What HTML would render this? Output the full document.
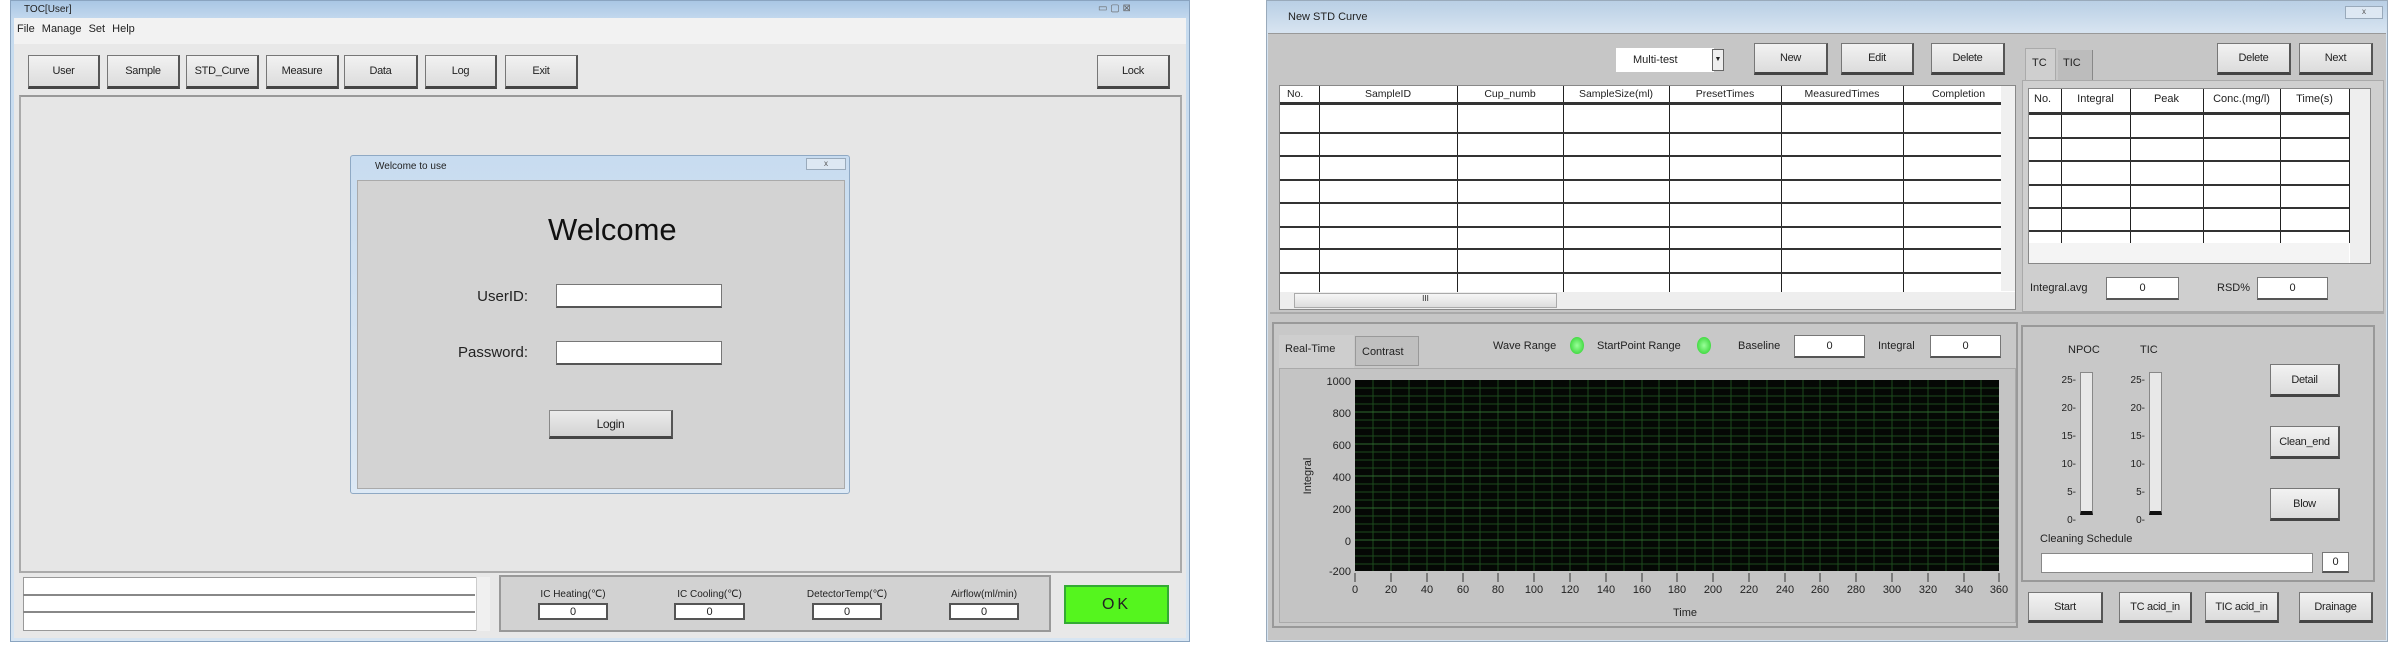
<!DOCTYPE html>
<html><head><meta charset="utf-8"><style>
*{margin:0;padding:0;box-sizing:border-box}
body{width:2388px;height:648px;background:#fff;position:relative;overflow:hidden;font-family:"Liberation Sans",sans-serif;font-size:11px;color:#222}
.a{position:absolute}
.btn{position:absolute;background:linear-gradient(#f2f2f2,#dcdcdc);border:1px solid #777;border-right:2px solid #555;border-bottom:3px solid #444;display:flex;align-items:center;justify-content:center;font-size:11px;letter-spacing:-0.3px}
.lbtn{position:absolute;background:linear-gradient(#ececec,#d2d2d2);border:1px solid #888;border-right:2px solid #555;border-bottom:3px solid #444;display:flex;align-items:center;justify-content:center;font-size:12px;letter-spacing:-0.3px}
.inp{position:absolute;background:#fff;border:1px solid #777;border-bottom:2px solid #555;display:flex;align-items:center;justify-content:center;font-size:11px}
.t{position:absolute;white-space:nowrap}
.vl{position:absolute;width:1px;background:#222}
.hl{position:absolute;height:2px;background:#333}
</style></head><body>
<!-- LEFT WINDOW -->
<div class="a" style="left:10px;top:0;width:1180px;height:642px;background:linear-gradient(#a9c6e4,#c6dbef 20px,#d7e5f2);border:1px solid #8aa4c0"></div>
<div class="t" style="left:24px;top:4px;font-size:10px">TOC[User]</div>
<div class="t" style="left:1098px;top:3px;font-size:10px;color:#666">▭ ▢ ⊠</div>
<div class="a" style="left:14px;top:18px;width:1172px;height:620px;background:#e8e8e8"></div>
<div class="a" style="left:14px;top:18px;width:1172px;height:26px;background:#f2f2f2"></div>
<div class="t" style="left:17px;top:23px;font-size:11px;word-spacing:4px">File Manage Set Help</div>
<div class="btn" style="left:28px;top:55px;width:72px;height:34px">User</div>
<div class="btn" style="left:107px;top:55px;width:73px;height:34px">Sample</div>
<div class="btn" style="left:186px;top:55px;width:73px;height:34px">STD_Curve</div>
<div class="btn" style="left:266px;top:55px;width:73px;height:34px">Measure</div>
<div class="btn" style="left:344px;top:55px;width:74px;height:34px">Data</div>
<div class="btn" style="left:425px;top:55px;width:72px;height:34px">Log</div>
<div class="btn" style="left:505px;top:55px;width:73px;height:34px">Exit</div>
<div class="btn" style="left:1097px;top:55px;width:73px;height:34px">Lock</div>
<div class="a" style="left:19px;top:95px;width:1163px;height:478px;border:2px solid #aaa;border-top-color:#999;background:#e6e6e6"></div>
<!-- dialog -->
<div class="a" style="left:350px;top:155px;width:500px;height:339px;background:linear-gradient(#c8dcf0,#dde9f5);border:1px solid #8fa9c4;border-radius:3px"></div>
<div class="t" style="left:375px;top:161px;font-size:10px">Welcome to use</div>
<div class="a" style="left:806px;top:158px;width:40px;height:12px;border:1px solid #9ab;background:#dde8f3;font-size:8px;text-align:center;color:#555">x</div>
<div class="a" style="left:357px;top:180px;width:488px;height:309px;background:#d3d3d3;border:1px solid #aaa"></div>
<div class="t" style="left:548px;top:212px;font-size:31px;color:#111">Welcome</div>
<div class="t" style="left:468px;top:288px;font-size:15px;width:60px;text-align:right">UserID:</div>
<div class="inp" style="left:556px;top:284px;width:166px;height:24px"></div>
<div class="t" style="left:448px;top:344px;font-size:15px;width:80px;text-align:right">Password:</div>
<div class="inp" style="left:556px;top:341px;width:166px;height:24px"></div>
<div class="lbtn" style="left:549px;top:410px;width:124px;height:29px">Login</div>
<!-- bottom -->
<div class="a" style="left:23px;top:577px;width:467px;height:54px;background:#fff;border:1px solid #999"></div>
<div class="a" style="left:23px;top:594px;width:452px;height:2px;background:#888"></div>
<div class="a" style="left:23px;top:611px;width:452px;height:2px;background:#888"></div>
<div class="a" style="left:476px;top:577px;width:14px;height:54px;background:#f0f0f0;border-left:1px solid #ccc"></div>
<div class="a" style="left:499px;top:575px;width:552px;height:57px;background:#d2d2d2;border:2px solid #999"></div>
<div class="t" style="left:538px;top:589px;width:70px;text-align:center;font-size:10px">IC Heating(℃)</div>
<div class="t" style="left:674px;top:589px;width:71px;text-align:center;font-size:10px">IC Cooling(℃)</div>
<div class="t" style="left:804px;top:589px;width:86px;text-align:center;font-size:10px">DetectorTemp(℃)</div>
<div class="t" style="left:944px;top:589px;width:80px;text-align:center;font-size:10px">Airflow(ml/min)</div>
<div class="inp" style="left:538px;top:603px;width:70px;height:17px;border:2px solid #555">0</div>
<div class="inp" style="left:674px;top:603px;width:71px;height:17px;border:2px solid #555">0</div>
<div class="inp" style="left:812px;top:603px;width:70px;height:17px;border:2px solid #555">0</div>
<div class="inp" style="left:949px;top:603px;width:70px;height:17px;border:2px solid #555">0</div>
<div class="a" style="left:1064px;top:585px;width:105px;height:39px;background:#55f51e;border:2px solid #3a3;display:flex;align-items:center;justify-content:center;font-size:16px;letter-spacing:3px">OK</div>

<!-- RIGHT WINDOW -->
<div class="a" style="left:1266px;top:0;width:1122px;height:642px;background:linear-gradient(#b9cfe5,#d6e3f0 30px);border:1px solid #9ab"></div>
<div class="t" style="left:1288px;top:11px;font-size:11px">New STD Curve</div>
<div class="a" style="left:2345px;top:6px;width:38px;height:13px;border:1px solid #9ab;background:#dde8f3;font-size:8px;text-align:center;color:#555">x</div>
<div class="a" style="left:1268px;top:33px;width:1118px;height:607px;background:#c6c6c6;border-top:1px solid #999"></div>
<div class="a" style="left:1270px;top:312px;width:1114px;height:2px;background:#aaa"></div>
<div class="inp" style="left:1616px;top:48px;width:98px;height:24px;border:none;justify-content:flex-start;padding-left:17px">Multi-test</div>
<div class="a" style="left:1712px;top:49px;width:12px;height:22px;background:#eee;border:1px solid #666;font-size:7px;text-align:center;line-height:20px">▼</div>
<div class="btn" style="left:1754px;top:43px;width:74px;height:32px">New</div>
<div class="btn" style="left:1841px;top:43px;width:73px;height:32px">Edit</div>
<div class="btn" style="left:1931px;top:43px;width:74px;height:32px">Delete</div>
<div class="a" style="left:2025px;top:48px;width:31px;height:34px;background:#cfcfcf;border:1px solid #aaa;border-bottom:none;padding:8px 0 0 6px">TC</div>
<div class="a" style="left:2058px;top:50px;width:35px;height:30px;background:#bcbcbc;border-right:1px solid #888;padding:7px 0 0 5px">TIC</div>
<div class="btn" style="left:2217px;top:43px;width:74px;height:32px">Delete</div>
<div class="btn" style="left:2299px;top:43px;width:74px;height:32px">Next</div>
<!-- main table -->
<div class="a" style="left:1279px;top:85px;width:737px;height:225px;background:#fff;border:1px solid #888"></div>
<div class="a" style="left:2001px;top:86px;width:14px;height:205px;background:#f0f0f0"></div>
<div class="a" style="left:1280px;top:292px;width:735px;height:17px;background:#eee"></div>
<div class="a" style="left:1294px;top:293px;width:263px;height:15px;background:linear-gradient(#f6f6f6,#ddd);border:1px solid #aaa;font-size:8px;text-align:center">III</div>
<div class="vl" style="left:1319px;top:86px;height:206px"></div>
<div class="vl" style="left:1457px;top:86px;height:206px"></div>
<div class="vl" style="left:1563px;top:86px;height:206px"></div>
<div class="vl" style="left:1669px;top:86px;height:206px"></div>
<div class="vl" style="left:1781px;top:86px;height:206px"></div>
<div class="vl" style="left:1903px;top:86px;height:206px"></div>
<div class="t" style="left:1287px;top:88px;font-size:10.5px">No.</div>
<div class="t" style="left:1319px;top:88px;width:138px;text-align:center;font-size:10.5px">SampleID</div>
<div class="t" style="left:1457px;top:88px;width:106px;text-align:center;font-size:10.5px">Cup_numb</div>
<div class="t" style="left:1563px;top:88px;width:106px;text-align:center;font-size:10.5px">SampleSize(ml)</div>
<div class="t" style="left:1669px;top:88px;width:112px;text-align:center;font-size:10.5px">PresetTimes</div>
<div class="t" style="left:1781px;top:88px;width:122px;text-align:center;font-size:10.5px">MeasuredTimes</div>
<div class="t" style="left:1932px;top:88px;font-size:10.5px">Completion</div>
<div class="hl" style="left:1280px;top:102px;width:721px;height:3px"></div>
<div class="hl" style="left:1280px;top:132px;width:721px"></div>
<div class="hl" style="left:1280px;top:155px;width:721px"></div>
<div class="hl" style="left:1280px;top:179px;width:721px"></div>
<div class="hl" style="left:1280px;top:202px;width:721px"></div>
<div class="hl" style="left:1280px;top:226px;width:721px"></div>
<div class="hl" style="left:1280px;top:248px;width:721px"></div>
<div class="hl" style="left:1280px;top:272px;width:721px"></div>
<!-- right table panel -->
<div class="a" style="left:2022px;top:80px;width:362px;height:232px;background:#cfcfcf;border:1px solid #aaa"></div>
<div class="a" style="left:2028px;top:88px;width:343px;height:176px;background:#fff;border:1px solid #888"></div>
<div class="a" style="left:2350px;top:89px;width:20px;height:174px;background:#eee"></div>
<div class="a" style="left:2029px;top:243px;width:320px;height:20px;background:#f4f4f4"></div>
<div class="vl" style="left:2061px;top:89px;height:154px"></div>
<div class="vl" style="left:2130px;top:89px;height:154px"></div>
<div class="vl" style="left:2203px;top:89px;height:154px"></div>
<div class="vl" style="left:2280px;top:89px;height:154px"></div>
<div class="vl" style="left:2349px;top:89px;height:154px"></div>
<div class="t" style="left:2034px;top:93px">No.</div>
<div class="t" style="left:2061px;top:93px;width:69px;text-align:center">Integral</div>
<div class="t" style="left:2130px;top:93px;width:73px;text-align:center">Peak</div>
<div class="t" style="left:2203px;top:93px;width:77px;text-align:center">Conc.(mg/l)</div>
<div class="t" style="left:2280px;top:93px;width:69px;text-align:center">Time(s)</div>
<div class="hl" style="left:2029px;top:112px;width:320px;height:3px"></div>
<div class="hl" style="left:2029px;top:137px;width:320px"></div>
<div class="hl" style="left:2029px;top:160px;width:320px"></div>
<div class="hl" style="left:2029px;top:184px;width:320px"></div>
<div class="hl" style="left:2029px;top:207px;width:320px"></div>
<div class="hl" style="left:2029px;top:230px;width:320px"></div>
<div class="t" style="left:2030px;top:282px">Integral.avg</div>
<div class="inp" style="left:2106px;top:277px;width:73px;height:23px">0</div>
<div class="t" style="left:2217px;top:282px">RSD%</div>
<div class="inp" style="left:2257px;top:277px;width:71px;height:23px">0</div>
<!-- lower left panel -->
<div class="a" style="left:1272px;top:322px;width:746px;height:306px;background:#c8c8c8;border:2px solid #999"></div>
<div class="a" style="left:1279px;top:335px;width:75px;height:33px;background:#cecece;padding:8px 0 0 6px">Real-Time</div>
<div class="a" style="left:1355px;top:336px;width:64px;height:30px;background:#bfbfbf;border:1px solid #999;padding:9px 0 0 6px">Contrast</div>
<div class="t" style="left:1493px;top:340px">Wave Range</div>
<div class="a" style="left:1570px;top:337px;width:14px;height:17px;border-radius:50%;background:radial-gradient(#9f9,#2c2)"></div>
<div class="t" style="left:1597px;top:340px">StartPoint Range</div>
<div class="a" style="left:1697px;top:337px;width:14px;height:17px;border-radius:50%;background:radial-gradient(#9f9,#2c2)"></div>
<div class="t" style="left:1738px;top:340px">Baseline</div>
<div class="inp" style="left:1794px;top:335px;width:71px;height:23px">0</div>
<div class="t" style="left:1878px;top:340px">Integral</div>
<div class="inp" style="left:1930px;top:335px;width:71px;height:23px">0</div>
<div class="a" style="left:1279px;top:368px;width:737px;height:255px;background:#c4c4c4;border:1px solid #aaa"></div>
<svg class="a" style="left:1279px;top:368px" width="737" height="255" font-family="Liberation Sans" font-size="11">
<rect x="76" y="12" width="644" height="191" fill="#050805"/>
<g stroke="#1d4a1d" stroke-width="1">
<path d="M94 12V203M112 12V203M130 12V203M148 12V203M166 12V203M184 12V203M201 12V203M219 12V203M237 12V203M255 12V203M273 12V203M291 12V203M309 12V203M327 12V203M345 12V203M363 12V203M380 12V203M398 12V203M416 12V203M434 12V203M452 12V203M470 12V203M488 12V203M506 12V203M524 12V203M541 12V203M559 12V203M577 12V203M595 12V203M613 12V203M631 12V203M649 12V203M667 12V203M685 12V203M702 12V203"/>
<path d="M76 20H720M76 28H720M76 36H720M76 52H720M76 60H720M76 68H720M76 84H720M76 92H720M76 100H720M76 116H720M76 124H720M76 132H720M76 148H720M76 156H720M76 164H720M76 180H720M76 188H720M76 196H720"/>
</g>
<g stroke="#2f6a2f"><path d="M76 44H720M76 76H720M76 108H720M76 140H720M76 172H720"/></g>
<g fill="#222" text-anchor="end">
<text x="72" y="17">1000</text><text x="72" y="49">800</text><text x="72" y="81">600</text><text x="72" y="113">400</text><text x="72" y="145">200</text><text x="72" y="177">0</text><text x="72" y="207">-200</text></g>
<g stroke="#333"><path d="M76 205V214M112 205V214M148 205V214M184 205V214M219 205V214M255 205V214M291 205V214M327 205V214M363 205V214M398 205V214M434 205V214M470 205V214M506 205V214M541 205V214M577 205V214M613 205V214M649 205V214M685 205V214M720 205V214"/></g>
<g fill="#222" text-anchor="middle">
<text x="76" y="225">0</text><text x="112" y="225">20</text><text x="148" y="225">40</text><text x="184" y="225">60</text><text x="219" y="225">80</text><text x="255" y="225">100</text><text x="291" y="225">120</text><text x="327" y="225">140</text><text x="363" y="225">160</text><text x="398" y="225">180</text><text x="434" y="225">200</text><text x="470" y="225">220</text><text x="506" y="225">240</text><text x="541" y="225">260</text><text x="577" y="225">280</text><text x="613" y="225">300</text><text x="649" y="225">320</text><text x="685" y="225">340</text><text x="720" y="225">360</text>
<text x="406" y="248">Time</text>
<text transform="translate(32 108) rotate(-90)">Integral</text></g>
</svg>
<!-- lower right panel -->
<div class="a" style="left:2021px;top:325px;width:354px;height:257px;background:#c8c8c8;border:2px solid #999"></div>
<div class="t" style="left:2068px;top:344px">NPOC</div>
<div class="t" style="left:2140px;top:344px">TIC</div>
<div class="a" style="left:2080px;top:372px;width:13px;height:143px;background:#e8e8e8;border:1px solid #888;border-bottom:4px solid #111"></div>
<div class="a" style="left:2149px;top:372px;width:13px;height:143px;background:#e8e8e8;border:1px solid #888;border-bottom:4px solid #111"></div>
<div class="t" style="left:2058px;top:367px;font-size:10px;line-height:28px;text-align:right;width:18px">25-<br>20-<br>15-<br>10-<br>5-<br>0-</div>
<div class="t" style="left:2127px;top:367px;font-size:10px;line-height:28px;text-align:right;width:18px">25-<br>20-<br>15-<br>10-<br>5-<br>0-</div>
<div class="btn" style="left:2270px;top:364px;width:70px;height:33px">Detail</div>
<div class="btn" style="left:2270px;top:426px;width:70px;height:33px">Clean_end</div>
<div class="btn" style="left:2270px;top:488px;width:70px;height:33px">Blow</div>
<div class="t" style="left:2040px;top:533px">Cleaning Schedule</div>
<div class="a" style="left:2041px;top:553px;width:272px;height:20px;background:#fff;border:1px solid #888"></div>
<div class="inp" style="left:2322px;top:552px;width:27px;height:21px">0</div>
<div class="btn" style="left:2028px;top:592px;width:75px;height:31px">Start</div>
<div class="btn" style="left:2119px;top:592px;width:73px;height:31px">TC acid_in</div>
<div class="btn" style="left:2205px;top:592px;width:74px;height:31px">TIC acid_in</div>
<div class="btn" style="left:2299px;top:592px;width:74px;height:31px">Drainage</div>
</body></html>
